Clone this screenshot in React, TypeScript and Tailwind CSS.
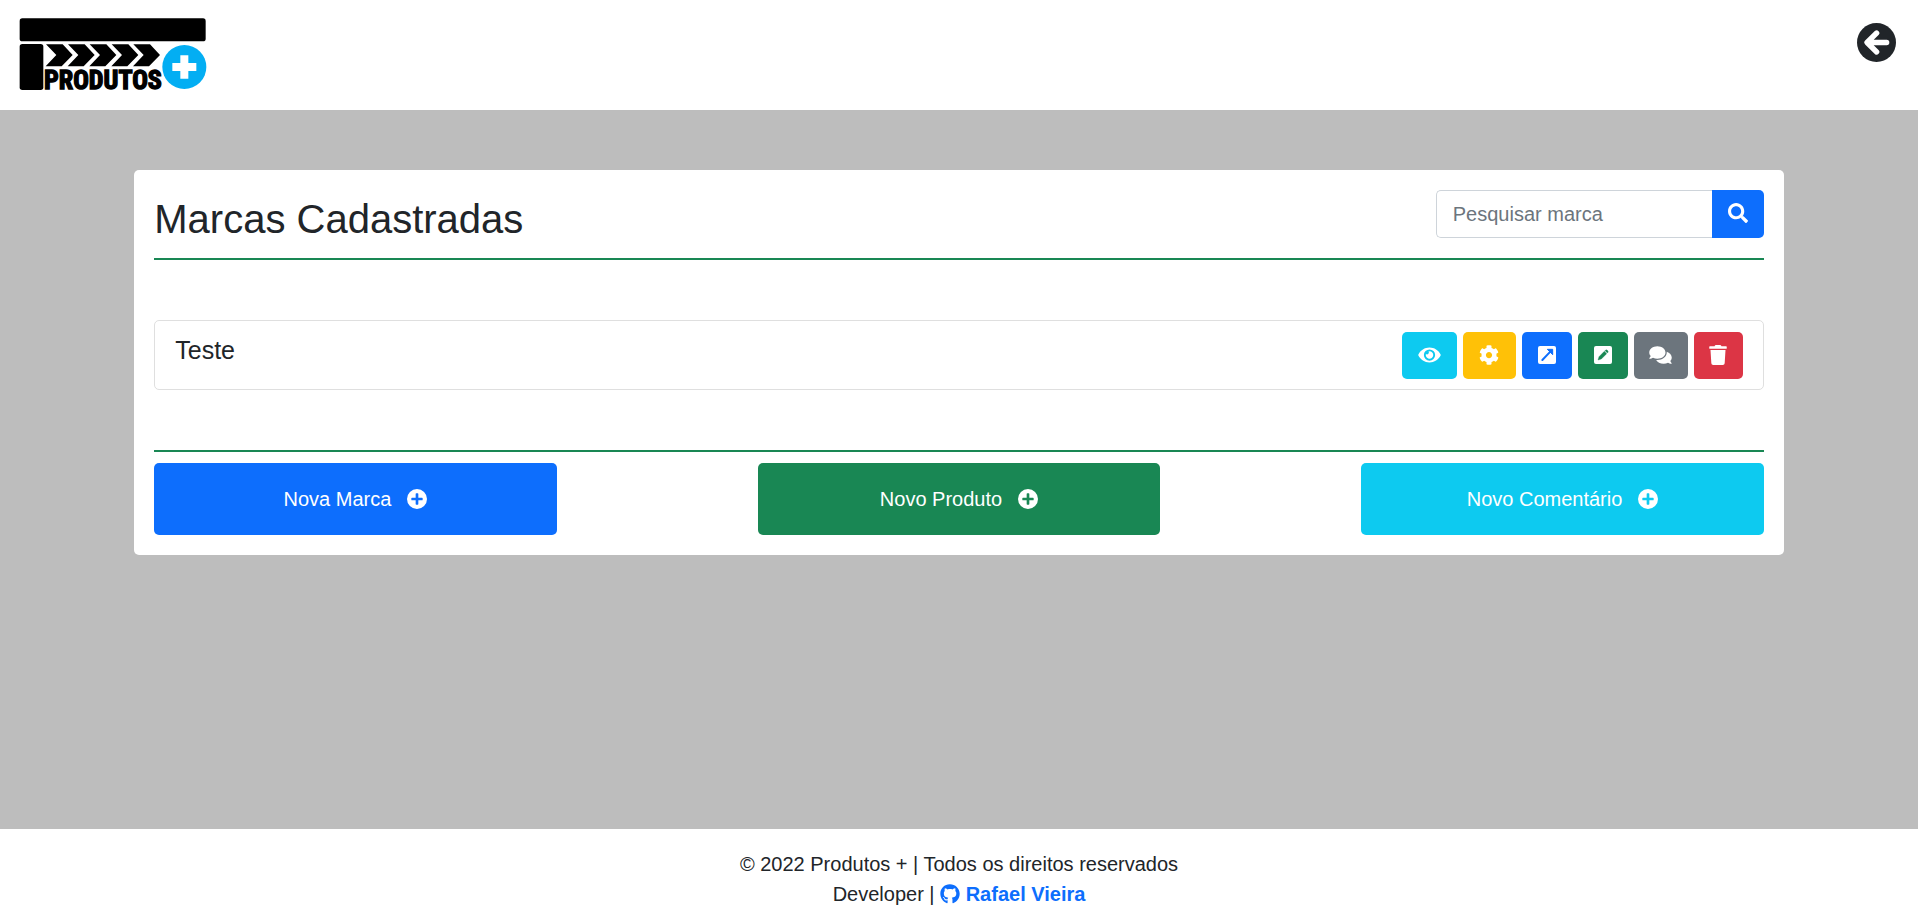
import type { ComponentType } from 'react';
import { FaCog, FaComments, FaEye, FaGithub, FaSearch, FaTrash } from 'react-icons/fa';

type Icon = ComponentType<{ className?: string }>;

function Logo() {
  return (
    <svg
      viewBox="57 53 564 219"
      className="h-[73px] w-[188px] overflow-visible"
      role="img"
      aria-label="Produtos +"
    >
      <rect x="59" y="54" width="558" height="69" rx="8" />
      <rect x="59" y="131" width="71" height="138" rx="8" />
      {[0, 66, 131, 197, 262].map((dx) => (
        <path key={dx} d={`M${138 + dx} 132h50l30 32-33 34h-48l32-34z`} />
      ))}
      <text
        x="132"
        y="267"
        fontSize="78"
        fontWeight="700"
        stroke="#000"
        strokeWidth="4"
        fontFamily="'Liberation Sans Narrow', 'Roboto Condensed', 'Open Sans Condensed', Roboto, sans-serif"
      >
        PRODUTOS
      </text>
      <circle cx="553" cy="200" r="66" fill="#03aef3" />
      <path d="M541 165h24v23h24v24h-24v23h-24v-23h-24v-24h24z" fill="#fff" />
    </svg>
  );
}

function ArrowLeftCircle() {
  return (
    <svg viewBox="0 0 117 117" className="size-[39px]" aria-hidden="true">
      <circle cx="58.5" cy="58.5" r="58.5" fill="#212529" />
      <path
        d="M59 30 30 58.5 59 87M33 58.5H89"
        fill="none"
        stroke="#fff"
        strokeWidth="16"
        strokeLinecap="round"
        strokeLinejoin="round"
      />
    </svg>
  );
}

function PlusCircle() {
  return (
    <svg viewBox="0 0 60 60" className="size-5" aria-hidden="true">
      <path
        fill="currentColor"
        fillRule="evenodd"
        d="M30 0a30 30 0 1 1 0 60a30 30 0 1 1 0-60zM28 13q-2 0-2 2v11h-11q-2 0-2 2v4q0 2 2 2h11v11q0 2 2 2h4q2 0 2-2v-11h11q2 0 2-2v-4q0-2-2-2h-11v-11q0-2-2-2z"
      />
    </svg>
  );
}

function OpenSquare({ className }: { className?: string }) {
  return (
    <svg viewBox="0 0 54 54" className={className} aria-hidden="true">
      <rect width="54" height="54" rx="6" fill="#fff" />
      <path d="M13 42 37 17" stroke="#0d6efd" strokeWidth="6" strokeLinecap="round" />
      <path
        d="M28 10h16v16z"
        fill="#0d6efd"
        stroke="#0d6efd"
        strokeWidth="3"
        strokeLinejoin="round"
      />
    </svg>
  );
}

function PenSquare({ className }: { className?: string }) {
  return (
    <svg viewBox="0 0 54 54" className={className} aria-hidden="true">
      <rect width="54" height="54" rx="6" fill="#fff" />
      <path
        d="M12 42l3-10 16-16 7 7-16 16zM33 14l2-2q2-1 4 0l3 3q1 2 0 4l-2 2z"
        fill="#198754"
        stroke="#198754"
        strokeWidth="1"
        strokeLinejoin="round"
      />
    </svg>
  );
}

const actions: { label: string; icon: Icon; box: string; glyph: string }[] = [
  { label: 'Visualizar', icon: FaEye, box: 'w-[55px] bg-[#0dcaf0]', glyph: 'h-5 w-[23px]' },
  { label: 'Configurar', icon: FaCog, box: 'w-[53px] bg-[#ffc107]', glyph: 'size-5' },
  { label: 'Abrir', icon: OpenSquare, box: 'w-[50px] bg-[#0d6efd]', glyph: 'size-[18px]' },
  { label: 'Editar', icon: PenSquare, box: 'w-[50px] bg-[#198754]', glyph: 'size-[18px]' },
  { label: 'Comentários', icon: FaComments, box: 'w-[54px] bg-[#6c757d]', glyph: 'h-5 w-[23px]' },
  { label: 'Excluir', icon: FaTrash, box: 'w-[49px] bg-[#dc3545]', glyph: 'size-5' },
];

const creators = [
  { label: 'Nova Marca', color: 'bg-[#0d6efd]' },
  { label: 'Novo Produto', color: 'bg-[#198754]' },
  { label: 'Novo Comentário', color: 'bg-[#0dcaf0]' },
];

export default function App() {
  return (
    <div className="flex min-h-screen flex-col bg-[#bdbdbd] font-['Liberation_Sans',Arial,sans-serif] text-xl leading-[30px] text-[#212529]">
      <header className="flex h-[110px] items-start justify-between bg-white pt-[18px] pr-[22px] pl-[19px]">
        <a href="#inicio">
          <Logo />
        </a>
        <a href="#voltar" aria-label="Voltar" className="pt-[5px]">
          <ArrowLeftCircle />
        </a>
      </header>

      <main className="flex-1 py-[60px]">
        <section className="mx-auto w-[86%] rounded-[5px] bg-white p-5">
          <div className="flex items-start justify-between border-b-2 border-[#198754] pb-[15px]">
            <h1 className="pt-[5px] text-[40px] leading-[48px]">Marcas Cadastradas</h1>
            <form className="flex h-12" onSubmit={(e) => e.preventDefault()}>
              <input
                type="search"
                aria-label="Pesquisar marca"
                placeholder="Pesquisar marca"
                className="w-[276px] rounded-l-[5px] border border-r-0 border-[#ced4da] bg-white px-4 outline-none placeholder:text-[#6c757d]"
              />
              <button
                type="submit"
                aria-label="Pesquisar"
                className="flex w-[52px] items-center justify-center rounded-r-[5px] bg-[#0d6efd] pb-[2px] text-white"
              >
                <FaSearch className="size-5" />
              </button>
            </form>
          </div>

          <ul className="py-[60px]">
            <li className="flex items-start justify-between rounded-[5px] border border-[#dfdfdf] px-5 pt-[11px] pb-[10px]">
              <h2 className="pt-[3px] text-[25px] leading-[30px]">Teste</h2>
              <div className="flex gap-[6px]">
                {actions.map(({ label, icon: Glyph, box, glyph }) => (
                  <button
                    key={label}
                    type="button"
                    aria-label={label}
                    className={`flex h-[47px] items-center justify-center rounded-[5px] pb-[2px] text-white ${box}`}
                  >
                    <Glyph className={glyph} />
                  </button>
                ))}
              </div>
            </li>
          </ul>

          <div className="flex justify-between border-t-2 border-[#198754] pt-[11px]">
            {creators.map(({ label, color }) => (
              <button
                key={label}
                type="button"
                className={`flex h-[72px] w-1/4 items-center justify-center gap-4 rounded-[5px] text-white ${color}`}
              >
                {label}
                <PlusCircle />
              </button>
            ))}
          </div>
        </section>
      </main>

      <footer className="bg-white pt-5 pb-3 text-center">
        <p>© 2022 Produtos + | Todos os direitos reservados</p>
        <p>
          Developer |{' '}
          <a href="#rafael-vieira" className="font-bold text-[#0d6efd]">
            <FaGithub className="mb-1 inline size-5" /> Rafael Vieira
          </a>
        </p>
      </footer>
    </div>
  );
}
